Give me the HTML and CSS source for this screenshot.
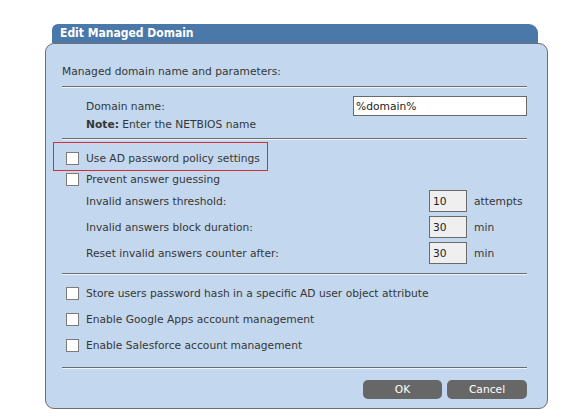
FILE: index.html
```html
<!DOCTYPE html>
<html>
<head>
<meta charset="utf-8">
<link rel="stylesheet" href="styles.css">
</head>
<body>
<div class="page">
  <div class="dialog">
    <div class="titlebar">Edit Managed Domain</div>
    <div class="panel">
      <div class="head">Managed domain name and parameters:</div>
      <div class="sep"></div>
      <div class="domain-row">
        <span class="label">Domain name:</span>
        <input class="text-input" type="text" value="%domain%">
      </div>
      <div class="note-row"><b>Note:</b> Enter the NETBIOS name</div>
      <div class="sep sep-b"></div>
      <div class="focus-box">
        <label class="check-row"><input type="checkbox" class="cb"><span>Use AD password policy settings</span></label>
      </div>
      <label class="check-row plain"><input type="checkbox" class="cb"><span>Prevent answer guessing</span></label>
      <div class="param-list">
        <div class="param-row"><span class="plabel">Invalid answers threshold:</span><input class="num-input" type="text" value="10"><span class="unit">attempts</span></div>
        <div class="param-row"><span class="plabel">Invalid answers block duration:</span><input class="num-input" type="text" value="30"><span class="unit">min</span></div>
        <div class="param-row"><span class="plabel">Reset invalid answers counter after:</span><input class="num-input" type="text" value="30"><span class="unit">min</span></div>
      </div>
      <div class="sep sep-c"></div>
      <div class="opt-list">
        <label class="check-row"><input type="checkbox" class="cb"><span>Store users password hash in a specific AD user object attribute</span></label>
        <label class="check-row"><input type="checkbox" class="cb"><span>Enable Google Apps account management</span></label>
        <label class="check-row"><input type="checkbox" class="cb"><span>Enable Salesforce account management</span></label>
      </div>
      <div class="sep sep-d"></div>
      <div class="buttons">
        <button class="btn">OK</button>
        <button class="btn">Cancel</button>
      </div>
    </div>
  </div>
</div>
</body>
</html>
```
FILE: styles.css
```css
html, body {
  margin: 0;
  padding: 0;
  background: #ffffff;
}
body {
  font-family: "DejaVu Sans", Verdana, sans-serif;
  font-size: 10.7px;
  color: #363636;
}
.page {
  padding: 24px 0 0 45px;
}
.dialog {
  width: 503px;
}
.titlebar {
  margin: 0 10px 0 7px;
  height: 19px;
  line-height: 19px;
  background: #4a78a8;
  border-radius: 6px 9px 0 0;
  color: #ffffff;
  font-family: "DejaVu Sans Condensed", "DejaVu Sans", sans-serif;
  font-weight: bold;
  font-size: 12px;
  padding-left: 8px;
}
.panel {
  border: 1px solid #6e6e6e;
  border-radius: 9px;
  background: #c3d8ee;
  padding: 0 20px 9px 16px;
}
.head {
  height: 20px;
  line-height: 20px;
  margin-top: 18px;
  margin-bottom: 4px;
}
.sep {
  border-top: 1px solid #6c6c6c;
  border-bottom: 1px solid #eef4fa;
}
.domain-row {
  display: flex;
  align-items: center;
  justify-content: space-between;
  margin-top: 8px;
  padding-left: 24px;
}
.text-input {
  width: 174px;
  height: 20px;
  box-sizing: border-box;
  border: 1px solid #6a6a6a;
  background: #ffffff;
  font: inherit;
  color: #222;
  padding: 0 2px;
  margin: 0;
}
.note-row {
  padding-left: 24px;
  height: 18px;
  line-height: 18px;
  margin-bottom: 4px;
}
.focus-box {
  margin: 2px 0 0 -9px;
  width: 215px;
  height: 29px;
  box-sizing: border-box;
  border: 1px solid #cf3238;
  display: flex;
  align-items: center;
  padding-left: 12px;
}
.check-row {
  display: flex;
  align-items: center;
  gap: 7px;
  height: 26px;
  padding-left: 4px;
}
.focus-box .check-row {
  padding-left: 0;
  height: auto;
  margin-top: 3px;
}
.check-row.plain {
  height: 16px;
  margin-top: 0;
}
.cb {
  -webkit-appearance: none;
  appearance: none;
  width: 13px;
  height: 13px;
  margin: 0;
  border: 1px solid #7b7b7b;
  background: #ffffff;
  box-sizing: border-box;
  flex: none;
}
.param-list {
  display: flex;
  flex-direction: column;
  gap: 4px;
  margin-top: 3px;
  padding-left: 24px;
}
.param-row {
  display: flex;
  align-items: center;
  height: 22px;
}
.plabel {
  width: 343px;
}
.num-input {
  width: 38px;
  height: 22px;
  box-sizing: border-box;
  border: 1px solid #6a6a6a;
  background: #efefef;
  font: inherit;
  color: #222;
  padding: 0 3px;
  margin: 0;
}
.unit {
  margin-left: 7px;
}
.sep-c {
  margin-top: 9px;
}
.opt-list {
  margin-top: 5px;
}
.sep-d {
  margin-top: 9px;
}
.buttons {
  display: flex;
  justify-content: flex-end;
  gap: 5px;
  margin-top: 11px;
}
.btn {
  width: 79px;
  height: 19px;
  border: none;
  border-radius: 5px;
  background: #676767;
  color: #ffffff;
  font: inherit;
  padding: 0;
  margin: 0;
}
.btn + .btn {
  width: 80px;
}
```
